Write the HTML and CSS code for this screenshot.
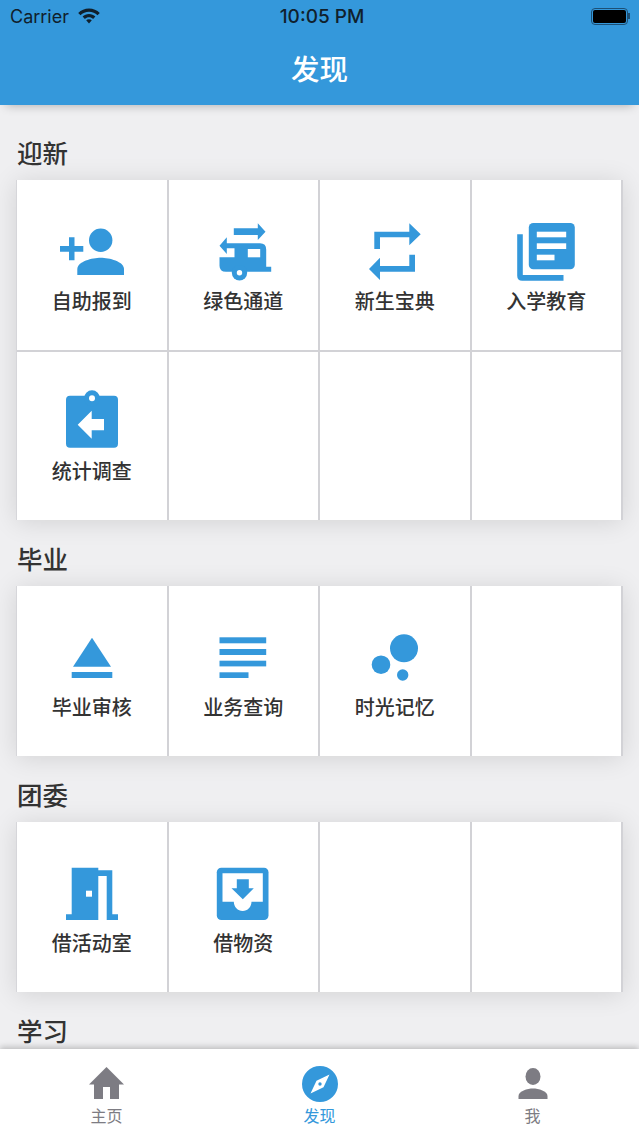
FILE: index.html
```html
<!DOCTYPE html>
<html lang="zh-CN">

<head>
  <meta charset="UTF-8">
  <meta name="viewport" content="width=device-width, initial-scale=1.0">
  <title>发现</title>
  <link rel="stylesheet" href="styles.css">
</head>

<body>
  <header class="topbar">
    <div class="status">
      <div class="status-left">
        <span>Carrier</span>
        <svg class="wifi" width="22" height="16" viewBox="0 0 22 16">
          <path d="M11 .6C6.800.6 3 2.200.2 4.900l2.300 2.400C4.700 5.100 7.700 3.800 11 3.800s6.300 1.300 8.500 3.500l2.300-2.400C19 2.200 15.200.6 11 .6z" />
          <path d="M11 6c-2.500 0-4.700 1-6.400 2.500l2.300 2.400C8 9.900 9.400 9.300 11 9.300s3 .6 4.100 1.600l2.300-2.400C15.700 7 13.500 6 11 6z" />
          <path d="M11 11.200c-1.100 0-2.100.4-2.800 1.100L11 15.400l2.800-3.100c-.7-.7-1.700-1.100-2.800-1.100z" />
        </svg>
      </div>
      <span class="clock">10:05 PM</span>
      <div class="battery"><i></i></div>
    </div>
    <h1 class="page-title">发现</h1>
  </header>

  <main class="content">
    <section class="group">
      <h2>迎新</h2>
      <div class="tiles">
        <div class="tile">
          <svg class="icon" viewBox="0 0 70 70">
            <circle cx="43.700" cy="25.300" r="11.700" />
            <path d="M20.300 60v-6c0-7.500 15-11.300 23.400-11.300S67 46.500 67 54v6z" />
            <path d="M12 22.300h5.500V31h8.800v5.700h-8.800v8.600H12v-8.600H3V31h9z" />
          </svg>
          <span>自助报到</span>
        </div>
        <div class="tile">
          <svg class="icon" viewBox="0 0 70 70">
            <path d="M25.800 13.300h24V8.300l7.700 8.400-7.700 8.300V20h-24z" />
            <path d="M11.500 30.700l7.300-8.400v6h33.200q6.200 0 6.200 6.200v17.200h5v5H18q-6.500 0-6.500-6v-8.400h15v-9h-7.700V39z" />
            <circle cx="31.500" cy="57.700" r="7.700" />
            <circle class="hole" cx="31.500" cy="57.700" r="2.700" />
            <rect class="hole" x="39.800" y="34" width="12.400" height="8.300" />
          </svg>
          <span>绿色通道</span>
        </div>
        <div class="tile">
          <svg class="icon" viewBox="0 0 70 70">
            <path d="M14.300 34V16.700h35V8.300l11.400 11-11.400 11v-8H20V34z" />
            <path d="M55 39.700v17H20v8.300L9 54l11-11.300V51h29.300V39.700z" />
          </svg>
          <span>新生宝典</span>
        </div>
        <div class="tile">
          <svg class="icon" viewBox="0 0 70 70">
            <path d="M6.200 19.300h5.600V60h40.700v5.700H11.200q-5 0-5-5z" />
            <rect x="17.800" y="8" width="46" height="46.300" rx="4.500" />
            <rect class="hole" x="25.800" y="16.700" width="29.400" height="5.600" />
            <rect class="hole" x="25.800" y="28.300" width="29.400" height="5.700" />
            <rect class="hole" x="25.800" y="39.700" width="17.700" height="5.600" />
          </svg>
          <span>入学教育</span>
        </div>
        <div class="tile">
          <svg class="icon" viewBox="0 0 70 70">
            <rect x="9" y="9.700" width="52" height="52" rx="4" />
            <circle cx="35" cy="12.300" r="8" />
            <circle class="hole" cx="35" cy="12.300" r="3" />
            <path class="hole" d="M20.700 38.700l14-14V33H47v11.300H34.700v8.400z" />
          </svg>
          <span>统计调查</span>
        </div>
        <div class="tile"></div>
        <div class="tile"></div>
        <div class="tile"></div>
      </div>
    </section>

    <section class="group">
      <h2>毕业</h2>
      <div class="tiles">
        <div class="tile">
          <svg class="icon" viewBox="0 0 70 70">
            <path d="M35 16.700l19 29H16z" />
            <rect x="14.700" y="51" width="40.600" height="6" />
          </svg>
          <span>毕业审核</span>
        </div>
        <div class="tile">
          <svg class="icon" viewBox="0 0 70 70">
            <rect x="11.500" y="16.300" width="46.700" height="6" />
            <rect x="11.500" y="28" width="46.700" height="6" />
            <rect x="11.500" y="39.700" width="46.700" height="5.700" />
            <rect x="11.500" y="51.300" width="29" height="5.700" />
          </svg>
          <span>业务查询</span>
        </div>
        <div class="tile">
          <svg class="icon" viewBox="0 0 70 70">
            <circle cx="44" cy="27.300" r="14" />
            <circle cx="21" cy="43.700" r="9.300" />
            <circle cx="42.700" cy="54" r="5.700" />
          </svg>
          <span>时光记忆</span>
        </div>
        <div class="tile"></div>
      </div>
    </section>

    <section class="group">
      <h2>团委</h2>
      <div class="tiles">
        <div class="tile">
          <svg class="icon" viewBox="0 0 70 70">
            <path d="M14.700 10.700h26.600v2.600h14v44H61V63H49.700V19h-8.400v44H9v-5.700h5.700z" />
            <rect class="hole" x="29" y="33.700" width="6" height="6" />
          </svg>
          <span>借活动室</span>
        </div>
        <div class="tile">
          <svg class="icon" viewBox="0 0 70 70">
            <rect x="8.800" y="10.700" width="51.700" height="52.300" rx="4.500" />
            <path class="hole" d="M14.500 16.300h40.300v28.400H43.500c0 5-3.900 9.300-8.800 9.300s-8.900-4.300-8.900-9.300H14.500z" />
            <path d="M28.800 22.300h12v9h5l-11 11-11.300-11h5.300z" />
          </svg>
          <span>借物资</span>
        </div>
        <div class="tile"></div>
        <div class="tile"></div>
      </div>
    </section>

    <section class="group">
      <h2>学习</h2>
    </section>
  </main>

  <nav class="tabbar">
    <div class="tab">
      <svg width="36" height="36" viewBox="0 0 36 36">
        <path d="M17.500 1L35 18.500h-5V33H21V21h-7v12H5V18.500H0z" />
      </svg>
      <span>主页</span>
    </div>
    <div class="tab tab-active">
      <svg width="36" height="36" viewBox="0 0 36 36">
        <path fill-rule="evenodd" d="M18 0a18 18 0 1 1 0 36 18 18 0 0 1 0-36zM27.500 8.500L14.500 14.800 8.500 27.500 21.500 21.200zM18 16.300a1.700 1.700 0 1 1 0 3.400 1.700 1.700 0 0 1 0-3.400z" />
      </svg>
      <span>发现</span>
    </div>
    <div class="tab">
      <svg width="36" height="36" viewBox="0 0 36 36">
        <ellipse cx="18" cy="10.500" rx="7.500" ry="8.500" />
        <path d="M3.500 33v-3c0-5 9-7.500 14.500-7.500S32.500 25 32.500 30v3z" />
      </svg>
      <span>我</span>
    </div>
  </nav>
</body>

</html>
```

FILE: styles.css
```css
* {
  box-sizing: border-box;
}

html,
body {
  margin: 0;
  height: 1136px;
  overflow: hidden;
}

body {
  display: flex;
  flex-direction: column;
  background-color: #efeff1;
  font-family: "Noto Sans CJK SC", "Noto Sans", sans-serif;
  color: #333;
}

.topbar {
  position: relative;
  z-index: 2;
  height: 105px;
  flex-shrink: 0;
  background-color: #3498db;
  box-shadow: 0 6px 10px -6px rgba(0, 0, 0, 0.3);
}

.status {
  display: flex;
  align-items: center;
  justify-content: space-between;
  height: 32px;
  padding: 0 9px 0 10px;
  color: #10202c;
  font-family: Inter, "Liberation Sans", sans-serif;
  font-size: 18px;
}

.status-left {
  display: flex;
  align-items: center;
  gap: 9px;
  width: 200px;
}

.wifi {
  fill: #10202c;
}

.clock {
  margin-left: 4px;
  font-weight: 500;
  font-size: 19px;
}

.battery {
  display: flex;
  align-items: center;
  width: 200px;
  height: 17px;
  justify-content: flex-end;
}

.battery i {
  display: block;
  width: 37px;
  height: 17px;
  border: 1px solid #1c4f75;
  border-radius: 4px;
  padding: 1px;
  background-color: #000;
  background-clip: content-box;
}

.battery::after {
  content: "";
  width: 2px;
  height: 6px;
  background-color: #1c4f75;
}

.page-title {
  margin: 0;
  padding-top: 16px;
  line-height: 40px;
  font-size: 28.500px;
  font-weight: 500;
  text-align: center;
  color: #fff;
}

.content {
  flex: 1;
  min-height: 0;
  overflow: hidden;
  padding: 9px 16px 0;
}

.group {
  margin-top: 21px;
}

.group h2 {
  margin: 0 0 11px 1px;
  line-height: 34px;
  font-size: 25.500px;
  font-weight: 500;
  color: #333;
}

.tiles {
  display: grid;
  grid-template-columns: repeat(4, 1fr);
  grid-auto-rows: 170px;
  background-color: #fff;
  border-left: 1px solid #d6d6da;
  box-shadow: 0 2px 24px rgba(0, 0, 0, 0.12);
}

.tile {
  display: flex;
  flex-direction: column;
  align-items: center;
  padding-top: 35px;
  border-right: 2px solid #d2d2d6;
}

.tile span {
  margin-top: 1px;
  line-height: 30px;
  font-size: 20px;
  font-weight: 500;
  color: #333;
}

/* second row hangs one px lower, the divider sits on top of it */
.tile:nth-child(n+5) {
  border-top: 2px solid #d2d2d6;
  padding-top: 34px;
}

.tile:nth-child(n+5) span {
  margin-top: 0;
}

.icon {
  display: block;
  width: 70px;
  height: 70px;
  flex-shrink: 0;
  fill: #3498db;
}

.hole {
  fill: #fff;
}

.tabbar {
  position: relative;
  z-index: 2;
  display: grid;
  grid-template-columns: repeat(3, 1fr);
  height: 87px;
  flex-shrink: 0;
  background-color: #fff;
  box-shadow: 0 -2px 6px rgba(0, 0, 0, 0.22);
}

.tab {
  display: flex;
  flex-direction: column;
  align-items: center;
  padding-top: 17px;
  fill: #7d7c83;
  color: #7d7c83;
}

.tab span {
  margin-top: 1px;
  line-height: 24px;
  font-size: 16px;
}

.tab-active {
  fill: #3498db;
  color: #3498db;
}
```
